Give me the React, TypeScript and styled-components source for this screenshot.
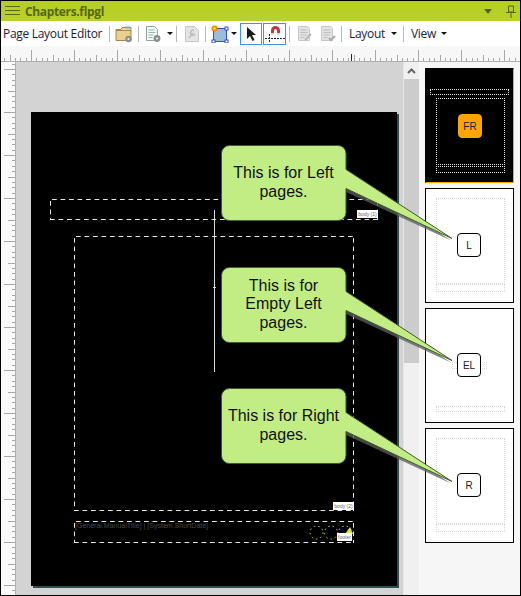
import React from 'react';
import styled, { createGlobalStyle } from 'styled-components';

const GlobalStyle = createGlobalStyle`
	html, body { margin: 0; padding: 0; background: #fff; }
`;

const Frame = styled.div`
	width: 521px;
	height: 596px;
	box-sizing: border-box;
	border: 1px solid #000;
	display: flex;
	flex-direction: column;
	font-family: "Open Sans", "Noto Sans", sans-serif;
	overflow: hidden;
	background: #f5f5f5;
`;

const TitleBar = styled.div`
	height: 20px;
	flex: none;
	display: flex;
	align-items: center;
	background: linear-gradient(#b4cf22, #bad02c);
	padding: 0 4px;
	gap: 4px;
`;

const TitleText = styled.span`
	font-size: 12px;
	font-weight: 700;
	color: #57680c;
	flex: 1;
	letter-spacing: -0.35px;
`;

const Toolbar = styled.div`
	height: 25px;
	flex: none;
	display: flex;
	align-items: center;
	background: #fff;
	font-size: 12px;
	color: #1c1c38;
	padding-left: 2px;
`;

const ToolLabel = styled.span<{ $w: number }>`
	width: ${p => p.$w}px;
	flex: none;
	white-space: nowrap;
	letter-spacing: -0.3px;
`;

const Sep = styled.div<{ $ml?: number; $mr?: number }>`
	width: 1px;
	height: 16px;
	flex: none;
	background: #b9b9b9;
	margin-left: ${p => p.$ml ?? 0}px;
	margin-right: ${p => p.$mr ?? 0}px;
`;

const Caret = styled.span<{ $ml?: number; $mr?: number }>`
	width: 0;
	height: 0;
	flex: none;
	border-left: 3px solid transparent;
	border-right: 3px solid transparent;
	border-top: 3px solid #111;
	margin-left: ${p => p.$ml ?? 0}px;
	margin-right: ${p => p.$mr ?? 0}px;
`;

const PinCaret = styled(Caret)`
	border-left-width: 4px;
	border-right-width: 4px;
	border-top: 5px solid #55660a;
`;

const IconSlot = styled.div<{ $w: number; $active?: boolean; $ml?: number }>`
	width: ${p => p.$w}px;
	height: 22px;
	flex: none;
	box-sizing: border-box;
	display: flex;
	align-items: center;
	justify-content: center;
	margin-left: ${p => p.$ml ?? 0}px;
	border: ${p => (p.$active ? '1px solid #3a97e8' : 'none')};
`;

const RulerRow = styled.div`
	height: 16px;
	flex: none;
	background: #f7f7f7;
	line-height: 0;
`;

const Body = styled.div`
	flex: 1;
	display: flex;
	min-height: 0;
	position: relative;
`;

const VRuler = styled.div`
	width: 15px;
	flex: none;
	background: #fafafa;
	line-height: 0;
`;

const Canvas = styled.div`
	width: 387px;
	flex: none;
	background: #d3d3d3;
	overflow: hidden;
	padding: 50px 0 0 15px;
	box-sizing: border-box;
`;

const Page = styled.div`
	width: 366px;
	height: 474px;
	background: #000;
	box-shadow: 2px 2px 0 #2f4f4f;
	position: relative;
`;

const dash = '#e4e4e4';

const Region = styled.div<{ $x: number; $y: number; $w: number; $h: number }>`
	position: absolute;
	left: ${p => p.$x}px;
	top: ${p => p.$y}px;
	width: ${p => p.$w}px;
	height: ${p => p.$h}px;
	background:
		linear-gradient(to right, ${dash} 5px, transparent 5px) 2px 0 / 8.5px 1px repeat-x,
		linear-gradient(to right, ${dash} 5px, transparent 5px) 0 100% / 8.5px 1px repeat-x,
		linear-gradient(to bottom, ${dash} 5px, transparent 5px) 0 2px / 1px 8.5px repeat-y,
		linear-gradient(to bottom, ${dash} 5px, transparent 5px) 100% 2px / 1px 8.5px repeat-y;
`;

const RegionTag = styled.span<{ $x: number; $y: number; $w: number }>`
	position: absolute;
	left: ${p => p.$x}px;
	top: ${p => p.$y}px;
	width: ${p => p.$w}px;
	height: 8px;
	background: #fff;
	color: #666;
	font: 5px/8px "Liberation Sans", sans-serif;
	text-align: center;
	white-space: nowrap;
	overflow: hidden;
`;

const FooterText = styled.span`
	position: absolute;
	left: 44px;
	top: 409px;
	font-size: 7px;
	line-height: 10px;
	color: #484848;
	white-space: nowrap;
	font-family: "Liberation Sans", sans-serif;
`;

const Guide = styled.div`
	position: absolute;
	left: 183px;
	top: 98px;
	width: 1px;
	height: 162px;
	background: #d8d8d8;

	&::after {
		content: '';
		position: absolute;
		left: -1px;
		top: 77px;
		width: 3px;
		height: 1px;
		background: #d8d8d8;
	}
`;

const FooterMarks = styled.svg`
	position: absolute;
	left: 278px;
	top: 412px;
`;

const ScrollBar = styled.div`
	width: 16px;
	flex: none;
	background: #f0f0f0;
	display: flex;
	flex-direction: column;
	border-left: 1px solid #e6e6e6;
	box-sizing: border-box;
`;

const ScrollUp = styled.div`
	height: 17px;
	flex: none;
	display: flex;
	align-items: center;
	justify-content: center;
`;

const ScrollThumb = styled.div`
	width: 15px;
	height: 284px;
	background: #cccccc;
`;

const SidePanel = styled.div`
	flex: 1;
	background: #f6f6f6;
	display: flex;
	flex-direction: column;
	gap: 5px;
	padding: 6px 0 0 6px;
`;

const Thumb = styled.div<{ $dark?: boolean }>`
	width: 89px;
	height: 115px;
	box-sizing: border-box;
	position: relative;
	background: ${p => (p.$dark ? '#000' : '#fff')};
	border: 1px solid #000;
	${p => p.$dark && 'border-right-color: #ffa500; border-bottom-color: #ffa500;'}
`;

const ThumbBox = styled.div<{ $x: number; $y: number; $w: number; $h: number; $dark?: boolean }>`
	position: absolute;
	left: ${p => p.$x}px;
	top: ${p => p.$y}px;
	width: ${p => p.$w}px;
	height: ${p => p.$h}px;
	box-sizing: border-box;
	border: 1px dotted ${p => (p.$dark ? '#e8e8e8' : '#d8d8d8')};
`;

const Badge = styled.div<{ $dark?: boolean }>`
	position: absolute;
	left: ${p => (p.$dark ? 32 : 31)}px;
	top: ${p => (p.$dark ? 45 : 44)}px;
	width: 24px;
	height: 24px;
	box-sizing: border-box;
	border-radius: 4px;
	background: ${p => (p.$dark ? '#ffa500' : '#fff')};
	border: 1px solid ${p => (p.$dark ? '#ffa500' : '#000')};
	display: flex;
	align-items: center;
	justify-content: center;
	font: 10px "Liberation Sans", sans-serif;
	color: #222;
`;

const Callout = styled.div<{ $top: number }>`
	position: absolute;
	left: 217px;
	top: ${p => p.$top}px;
	width: 240px;
	height: 100px;
`;

const CalloutShape = styled.svg`
	position: absolute;
	left: 0;
	top: 0;
`;

const CalloutText = styled.div`
	position: absolute;
	left: 3px;
	top: 0;
	width: 125px;
	height: 77px;
	display: flex;
	align-items: center;
	justify-content: center;
	text-align: center;
	font: 16px/18.5px "Liberation Sans", Arial, sans-serif;
	color: #111;
`;

const hTicks = () => {
	const ticks: React.ReactNode[] = [];
	for (let i = -5; i < 96; i++) {
		const x = 30 + i * 5.375;
		const h = i % 8 === 0 ? 11 : i % 4 === 0 ? 6 : 3;
		ticks.push(<rect key={i} x={Math.round(x)} y={15 - h} width={1} height={h} fill="#a8a8a8" />);
	}
	return ticks;
};

const vTicks = () => {
	const ticks: React.ReactNode[] = [];
	for (let i = -9; i < 92; i++) {
		const y = 50 + i * 5.375;
		const w = i % 8 === 0 ? 11 : i % 4 === 0 ? 7 : 3;
		ticks.push(<rect key={i} x={14 - w} y={Math.round(y)} width={w} height={1} fill="#a8a8a8" />);
	}
	return ticks;
};

const HamburgerIcon = () => (
	<svg width="16" height="14" viewBox="0 0 16 14">
		<path d="M0 2.500h15M0 6.500h15M0 10.500h15" stroke="#5a6b0c" strokeWidth="1" />
	</svg>
);

const FolderIcon = () => (
	<svg width="18" height="18" viewBox="0 0 18 18">
		<path d="M1 4.500h5l1 -2h9v3H1z" fill="#f6dc9c" stroke="#a8874a" />
		<path d="M1 5.500h15v10H1z" fill="#edcf8d" stroke="#a8874a" />
		<rect x="10" y="1.500" width="5" height="2" fill="#5ab4dc" />
		<circle cx="13.500" cy="14" r="3.200" fill="#8d8d8d" />
		<circle cx="13.500" cy="14" r="1.100" fill="#eee" />
	</svg>
);

const DocGearIcon = () => (
	<svg width="18" height="18" viewBox="0 0 18 18">
		<path d="M2.500 1.500h8l3 3v11h-11z" fill="#f4f8f6" stroke="#8aa9a0" />
		<path d="M4.500 5h6M4.500 7.500h7M4.500 10h5M4.500 12.500h4" stroke="#9db4ae" />
		<circle cx="13" cy="13.500" r="3.400" fill="#8d8d8d" />
		<circle cx="13" cy="13.500" r="1.100" fill="#eee" />
	</svg>
);

const WrenchDocIcon = () => (
	<svg width="16" height="18" viewBox="0 0 16 18">
		<path d="M1.500 1.500h9l4 4v11h-13z" fill="#e4e4e4" stroke="#c6c6c6" />
		<path d="M5 13l4 -5M10 5.500a2.400 2.400 0 1 0 1 3.400" stroke="#bdbdbd" strokeWidth="1.600" fill="none" />
	</svg>
);

const ShapeIcon = () => (
	<svg width="18" height="18" viewBox="0 0 18 18">
		<rect x="2.500" y="3.500" width="13" height="13" fill="#9dbcdc" stroke="#2f50d0" />
		<rect x="14" y="2" width="3" height="3" fill="#fff" stroke="#2f50d0" />
		<rect x="1" y="15" width="3" height="3" fill="#fff" stroke="#2f50d0" />
		<rect x="14" y="15" width="3" height="3" fill="#fff" stroke="#2f50d0" />
		<circle cx="3.500" cy="3.500" r="3" fill="#f2881d" />
		<circle cx="3.500" cy="3.500" r="1.200" fill="#f7e14a" />
	</svg>
);

const ArrowIcon = () => (
	<svg width="12" height="16" viewBox="0 0 12 16">
		<path d="M2 1l0 12 3 -3 2.500 5 2 -1 -2.500 -5 4 0z" fill="#1c1c1c" />
	</svg>
);

const MagnetIcon = () => (
	<svg width="20" height="18" viewBox="0 0 20 18">
		<path d="M6 10V5.500a4.500 4.500 0 0 1 9 0V10h-3V5.500a1.500 1.500 0 0 0 -3 0V10z" fill="#c8353a" />
		<path d="M6 8h3v2H6zM12 8h3v2h-3z" fill="#d9d9d9" />
		<path d="M0 13.500h20M4.500 9v9" stroke="#222" strokeDasharray="2 1" />
	</svg>
);

const PageMarkIcon = ({ tick }: { tick?: boolean }) => (
	<svg width="16" height="17" viewBox="0 0 16 17">
		<path d="M1.500 1.500h9l2 2v12h-11z" fill="#e2e2e2" stroke="#c8c8c8" />
		<path d="M3.500 5h7M3.500 7.500h7M3.500 10h6M3.500 12.500h4" stroke="#bfbfbf" />
		{tick ? (
			<path d="M9 13l2 2 4 -4" stroke="#aaa" strokeWidth="2" fill="none" />
		) : (
			<path d="M8 15l6 -6" stroke="#b8b8b8" strokeWidth="2" />
		)}
	</svg>
);

const BalloonShape = () => (
	<CalloutShape width="240" height="100" viewBox="0 0 240 100">
		<path d="M128 28L233 96.500 128 48z" fill="#5c5c5c" opacity="0.75" />
		<path
			d="M11.500 1.500h108.500a8 8 0 0 1 8 8V25.500L234 94.500 128 44.500V68.500a8 8 0 0 1 -8 8H11.500a8 8 0 0 1 -8 -8V9.500a8 8 0 0 1 8 -8z"
			fill="#c2ed84"
			stroke="#3f5a2a"
		/>
	</CalloutShape>
);

type BalloonProps = { top: number; children: React.ReactNode };

const Balloon = ({ top, children }: BalloonProps) => (
	<Callout $top={top}>
		<BalloonShape />
		<CalloutText>{children}</CalloutText>
	</Callout>
);

const App = () => {
	return (
		<Frame>
			<GlobalStyle />
			<TitleBar>
				<HamburgerIcon />
				<TitleText>Chapters.flpgl</TitleText>
				<PinCaret $mr={10} />
				<svg width="10" height="13" viewBox="0 0 10 13">
					<path d="M2.500 1h5v6h-5zM0 7.500h10M5 8v5" stroke="#55660a" fill="none" />
				</svg>
			</TitleBar>
			<Toolbar>
				<ToolLabel $w={106}>Page Layout Editor</ToolLabel>
				<Sep $mr={5} />
				<IconSlot $w={18}><FolderIcon /></IconSlot>
				<Sep $ml={5} $mr={5} />
				<IconSlot $w={18}><DocGearIcon /></IconSlot>
				<Caret $ml={5} />
				<Sep $ml={3} $mr={7} />
				<IconSlot $w={16}><WrenchDocIcon /></IconSlot>
				<Sep $ml={5} $mr={5} />
				<IconSlot $w={18}><ShapeIcon /></IconSlot>
				<Caret $ml={2} />
				<IconSlot $w={22} $active $ml={3}><ArrowIcon /></IconSlot>
				<IconSlot $w={23} $active $ml={1}><MagnetIcon /></IconSlot>
				<Sep $ml={3} $mr={7} />
				<IconSlot $w={16}><PageMarkIcon /></IconSlot>
				<IconSlot $w={16} $ml={7}><PageMarkIcon tick /></IconSlot>
				<Sep $ml={5} $mr={7} />
				<ToolLabel $w={40}>Layout</ToolLabel>
				<Caret $ml={2} />
				<Sep $ml={6} $mr={7} />
				<ToolLabel $w={30}>View</ToolLabel>
				<Caret />
			</Toolbar>
			<RulerRow>
				<svg width="519" height="16" viewBox="0 0 519 16">
					{hTicks()}
					<rect x="0" y="15" width="519" height="1" fill="#b0b0b0" />
					<rect x="350" y="8" width="1" height="7" fill="#1414c8" />
				</svg>
			</RulerRow>
			<Body>
				<VRuler>
					<svg width="15" height="533" viewBox="0 0 15 533">
						{vTicks()}
						<rect x="14" y="0" width="1" height="533" fill="#b0b0b0" />
					</svg>
				</VRuler>
				<Canvas>
					<Page>
						<Region $x={19} $y={87} $w={328} $h={21} />
						<RegionTag $x={326} $y={98} $w={21}>body (1)</RegionTag>
						<Region $x={43} $y={124} $w={280} $h={275} />
						<RegionTag $x={302} $y={390} $w={21}>body (2)</RegionTag>
						<Region $x={43} $y={409} $w={280} $h={22} />
						<FooterText>[General.ManualTitle] | [System.ShortDate]</FooterText>
						<FooterMarks width="46" height="16" viewBox="0 0 46 16">
							<g fill="none" stroke="#c6dc2a" strokeDasharray="1.500 3">
								<circle cx="7.500" cy="8.500" r="6.500" />
								<circle cx="22" cy="8.500" r="6.500" />
								<circle cx="36" cy="8.500" r="6.500" />
							</g>
							<path d="M36 10L41 3l3 7z" fill="#d8e84a" />
						</FooterMarks>
						<RegionTag $x={306} $y={421} $w={15}>footer</RegionTag>
						<Guide />
					</Page>
				</Canvas>
				<ScrollBar>
					<ScrollUp>
						<svg width="9" height="6" viewBox="0 0 9 6">
							<path d="M1 5l3.500-3.500L8 5" stroke="#666" strokeWidth="2" fill="none" />
						</svg>
					</ScrollUp>
					<ScrollThumb />
				</ScrollBar>
				<SidePanel>
					<Thumb $dark>
						<ThumbBox $dark $x={4} $y={20} $w={79} $h={6} />
						<ThumbBox $dark $x={10} $y={29} $w={69} $h={69} />
						<ThumbBox $dark $x={10} $y={95} $w={69} $h={9} />
						<Badge $dark>FR</Badge>
					</Thumb>
					<Thumb>
						<ThumbBox $x={10} $y={9} $w={69} $h={86} />
						<ThumbBox $x={10} $y={95} $w={69} $h={8} />
						<Badge>L</Badge>
					</Thumb>
					<Thumb>
						<ThumbBox $x={26} $y={53} $w={35} $h={7} />
						<ThumbBox $x={10} $y={97} $w={69} $h={6} />
						<Badge>EL</Badge>
					</Thumb>
					<Thumb>
						<ThumbBox $x={10} $y={9} $w={69} $h={86} />
						<ThumbBox $x={10} $y={95} $w={69} $h={8} />
						<Badge>R</Badge>
					</Thumb>
				</SidePanel>
				<Balloon top={82}>This is for Left<br />pages.</Balloon>
				<Balloon top={204}>This is for<br />Empty Left<br />pages.</Balloon>
				<Balloon top={325}>This is for Right<br />pages.</Balloon>
			</Body>
		</Frame>
	);
};

export default App;
